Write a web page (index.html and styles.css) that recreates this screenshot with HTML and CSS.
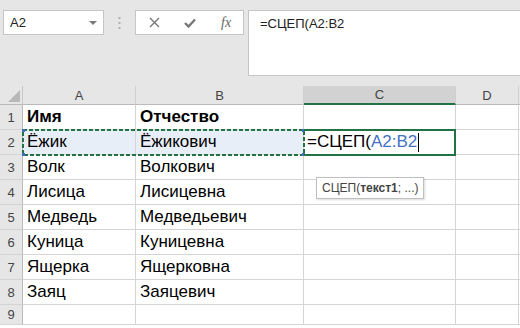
FILE: index.html
```html
<!DOCTYPE html>
<html lang="ru">
<head>
  <meta charset="UTF-8" />
  <title>СЦЕП</title>
  <link rel="stylesheet" href="styles.css">
</head>
<body>

  <!-- BARRE DE FORMULE -->
  <div class="barre">
    <div class="nom">
      <span>A2</span>
      <svg width="8" height="4" viewBox="0 0 8 4"><path d="M0 0 L8 0 L4 4 Z" fill="#7a7a7a"/></svg>
    </div>
    <div class="poignee">
      <svg width="3" height="12" viewBox="0 0 3 12">
        <rect x="0.5" y="0" width="2" height="2" fill="#b0b0b0"/>
        <rect x="0.5" y="5" width="2" height="2" fill="#b0b0b0"/>
        <rect x="0.5" y="10" width="2" height="2" fill="#b0b0b0"/>
      </svg>
    </div>
    <div class="boutons">
      <svg class="ico" width="11" height="11" viewBox="0 0 11 11"><path d="M1 1 L10 10 M10 1 L1 10" stroke="#777" stroke-width="1.4"/></svg>
      <svg class="ico coche" width="12" height="10" viewBox="0 0 12 10"><path d="M1 5 L4.5 8.5 L11 1.5" stroke="#777" stroke-width="2.4" fill="none"/></svg>
      <span class="fx">fx</span>
    </div>
    <div class="formule">=СЦЕП(A2:B2</div>
  </div>

  <!-- FEUILLE -->
  <div class="feuille">
    <div class="coin"><svg width="12" height="12" viewBox="0 0 12 12"><path d="M12 0 L12 12 L0 12 Z" fill="#b8b8b8"/></svg></div>
    <div class="entete">A</div>
    <div class="entete">B</div>
    <div class="entete actif">C</div>
    <div class="entete">D</div>
    <div class="entete"></div>

    <div class="num">1</div>
    <div class="cel gras">Имя</div>
    <div class="cel gras">Отчество</div>
    <div class="cel"></div>
    <div class="cel"></div>
    <div class="cel"></div>

    <div class="num">2</div>
    <div class="cel plage">Ёжик</div>
    <div class="cel plage">Ёжикович</div>
    <div class="cel saisie">=СЦЕП(<span class="ref">A2:B2</span><span class="curseur"></span></div>
    <div class="cel"></div>
    <div class="cel"></div>

    <div class="num">3</div>
    <div class="cel">Волк</div>
    <div class="cel">Волкович</div>
    <div class="cel"></div>
    <div class="cel"></div>
    <div class="cel"></div>

    <div class="num">4</div>
    <div class="cel">Лисица</div>
    <div class="cel">Лисицевна</div>
    <div class="cel"></div>
    <div class="cel"></div>
    <div class="cel"></div>

    <div class="num">5</div>
    <div class="cel">Медведь</div>
    <div class="cel">Медведьевич</div>
    <div class="cel"></div>
    <div class="cel"></div>
    <div class="cel"></div>

    <div class="num">6</div>
    <div class="cel">Куница</div>
    <div class="cel">Куницевна</div>
    <div class="cel"></div>
    <div class="cel"></div>
    <div class="cel"></div>

    <div class="num">7</div>
    <div class="cel">Ящерка</div>
    <div class="cel">Ящерковна</div>
    <div class="cel"></div>
    <div class="cel"></div>
    <div class="cel"></div>

    <div class="num">8</div>
    <div class="cel">Заяц</div>
    <div class="cel">Заяцевич</div>
    <div class="cel"></div>
    <div class="cel"></div>
    <div class="cel"></div>

    <div class="num">9</div>
    <div class="cel"></div>
    <div class="cel"></div>
    <div class="cel"></div>
    <div class="cel"></div>
    <div class="cel"></div>

    <!-- marquee A2:B2 -->
    <svg class="marquee" width="283" height="27" viewBox="0 0 283 27">
      <rect x="1" y="1" width="281" height="25" fill="none" stroke="#217346" stroke-width="2" stroke-dasharray="4 2"/>
      <rect x="0" y="0" width="3" height="3" fill="#3f6fc4"/>
      <rect x="0" y="24" width="3" height="3" fill="#3f6fc4"/>
      <rect x="280" y="0" width="3" height="3" fill="#3f6fc4"/>
      <rect x="280" y="24" width="3" height="3" fill="#3f6fc4"/>
    </svg>
    <div class="active"></div>
    <div class="bulle">СЦЕП(<b>текст1</b>; ...)</div>
  </div>

</body>
</html>
```

FILE: styles.css
```css
body {
  margin: 0;
  background: #e6e6e6;
  font-family: "Liberation Sans", Arial, sans-serif;
  width: 520px;
  height: 328px;
  overflow: hidden;
}

/* barre de formule */
.barre {
  display: flex;
  align-items: flex-start;
  padding: 10px 0 0 3px;
  height: 76px;
  box-sizing: border-box;
}

.nom {
  width: 101px;
  height: 25px;
  box-sizing: border-box;
  background: #fff;
  border: 1px solid #c6c6c6;
  display: flex;
  align-items: center;
  justify-content: space-between;
  padding: 0 6px 0 6px;
  font-size: 13px;
  color: #222;
}

.poignee {
  width: 31px;
  height: 25px;
  display: flex;
  align-items: center;
  justify-content: center;
}

.boutons {
  width: 109px;
  height: 25px;
  box-sizing: border-box;
  background: #fff;
  border: 1px solid #c6c6c6;
  display: flex;
  align-items: center;
  padding: 0 0 0 13px;
}

.coche {
  margin-left: 24px;
}

.fx {
  margin-left: 25px;
  font-family: "Liberation Serif", "Times New Roman", serif;
  font-style: italic;
  font-size: 14px;
  color: #666;
}

.formule {
  flex: 1;
  margin-left: 4px;
  height: 66px;
  box-sizing: border-box;
  background: #fff;
  border: 1px solid #c6c6c6;
  border-right: none;
  padding: 5px 0 0 11px;
  font-size: 13px;
  color: #222;
}

/* feuille */
.feuille {
  position: relative;
  margin-top: 10px;
  display: grid;
  grid-template-columns: 23px 113px 168px 152px 63px 1fr;
  grid-template-rows: 19px repeat(8, 25px) 20px 1fr;
  height: 242px;
  background: #fff;
}

.coin {
  background: #e6e6e6;
  border-right: 1px solid #c8c8c8;
  border-bottom: 1px solid #bababa;
  display: flex;
  align-items: flex-end;
  justify-content: flex-end;
  padding: 0 2px 2px 0;
}

.entete {
  background: #e6e6e6;
  border-right: 1px solid #cfcfcf;
  border-bottom: 1px solid #bababa;
  font-size: 13px;
  color: #444;
  display: flex;
  align-items: center;
  justify-content: center;
}

.entete.actif {
  background: #d2d2d2;
  border-bottom: 2px solid #217346;
}

.num {
  background: #e6e6e6;
  border-right: 1px solid #bababa;
  border-bottom: 1px solid #d4d4d4;
  font-size: 13px;
  color: #444;
  display: flex;
  align-items: center;
  justify-content: center;
}

.cel {
  border-right: 1px solid #d4d4d4;
  border-bottom: 1px solid #d4d4d4;
  font-size: 17px;
  color: #000;
  padding: 0 0 0 4px;
  display: flex;
  align-items: center;
  white-space: nowrap;
  overflow: visible;
}

.gras {
  font-weight: bold;
}

.plage {
  background: #e8eef7;
}

.saisie {
  padding-left: 3px;
}

.ref {
  color: #4472c4;
}

.curseur {
  display: inline-block;
  width: 1px;
  height: 19px;
  background: #000;
  margin-left: 1px;
}

.marquee {
  position: absolute;
  left: 22px;
  top: 43px;
}

.active {
  position: absolute;
  left: 304px;
  top: 43px;
  width: 152px;
  height: 27px;
  box-sizing: border-box;
  border: 2px solid #217346;
  border-left: none;
}

.bulle {
  position: absolute;
  left: 316px;
  top: 91px;
  background: #fff;
  border: 1px solid #bfbfbf;
  box-shadow: 1px 1px 2px rgba(0, 0, 0, 0.15);
  font-size: 12px;
  color: #444;
  padding: 3px 5px;
}
```
